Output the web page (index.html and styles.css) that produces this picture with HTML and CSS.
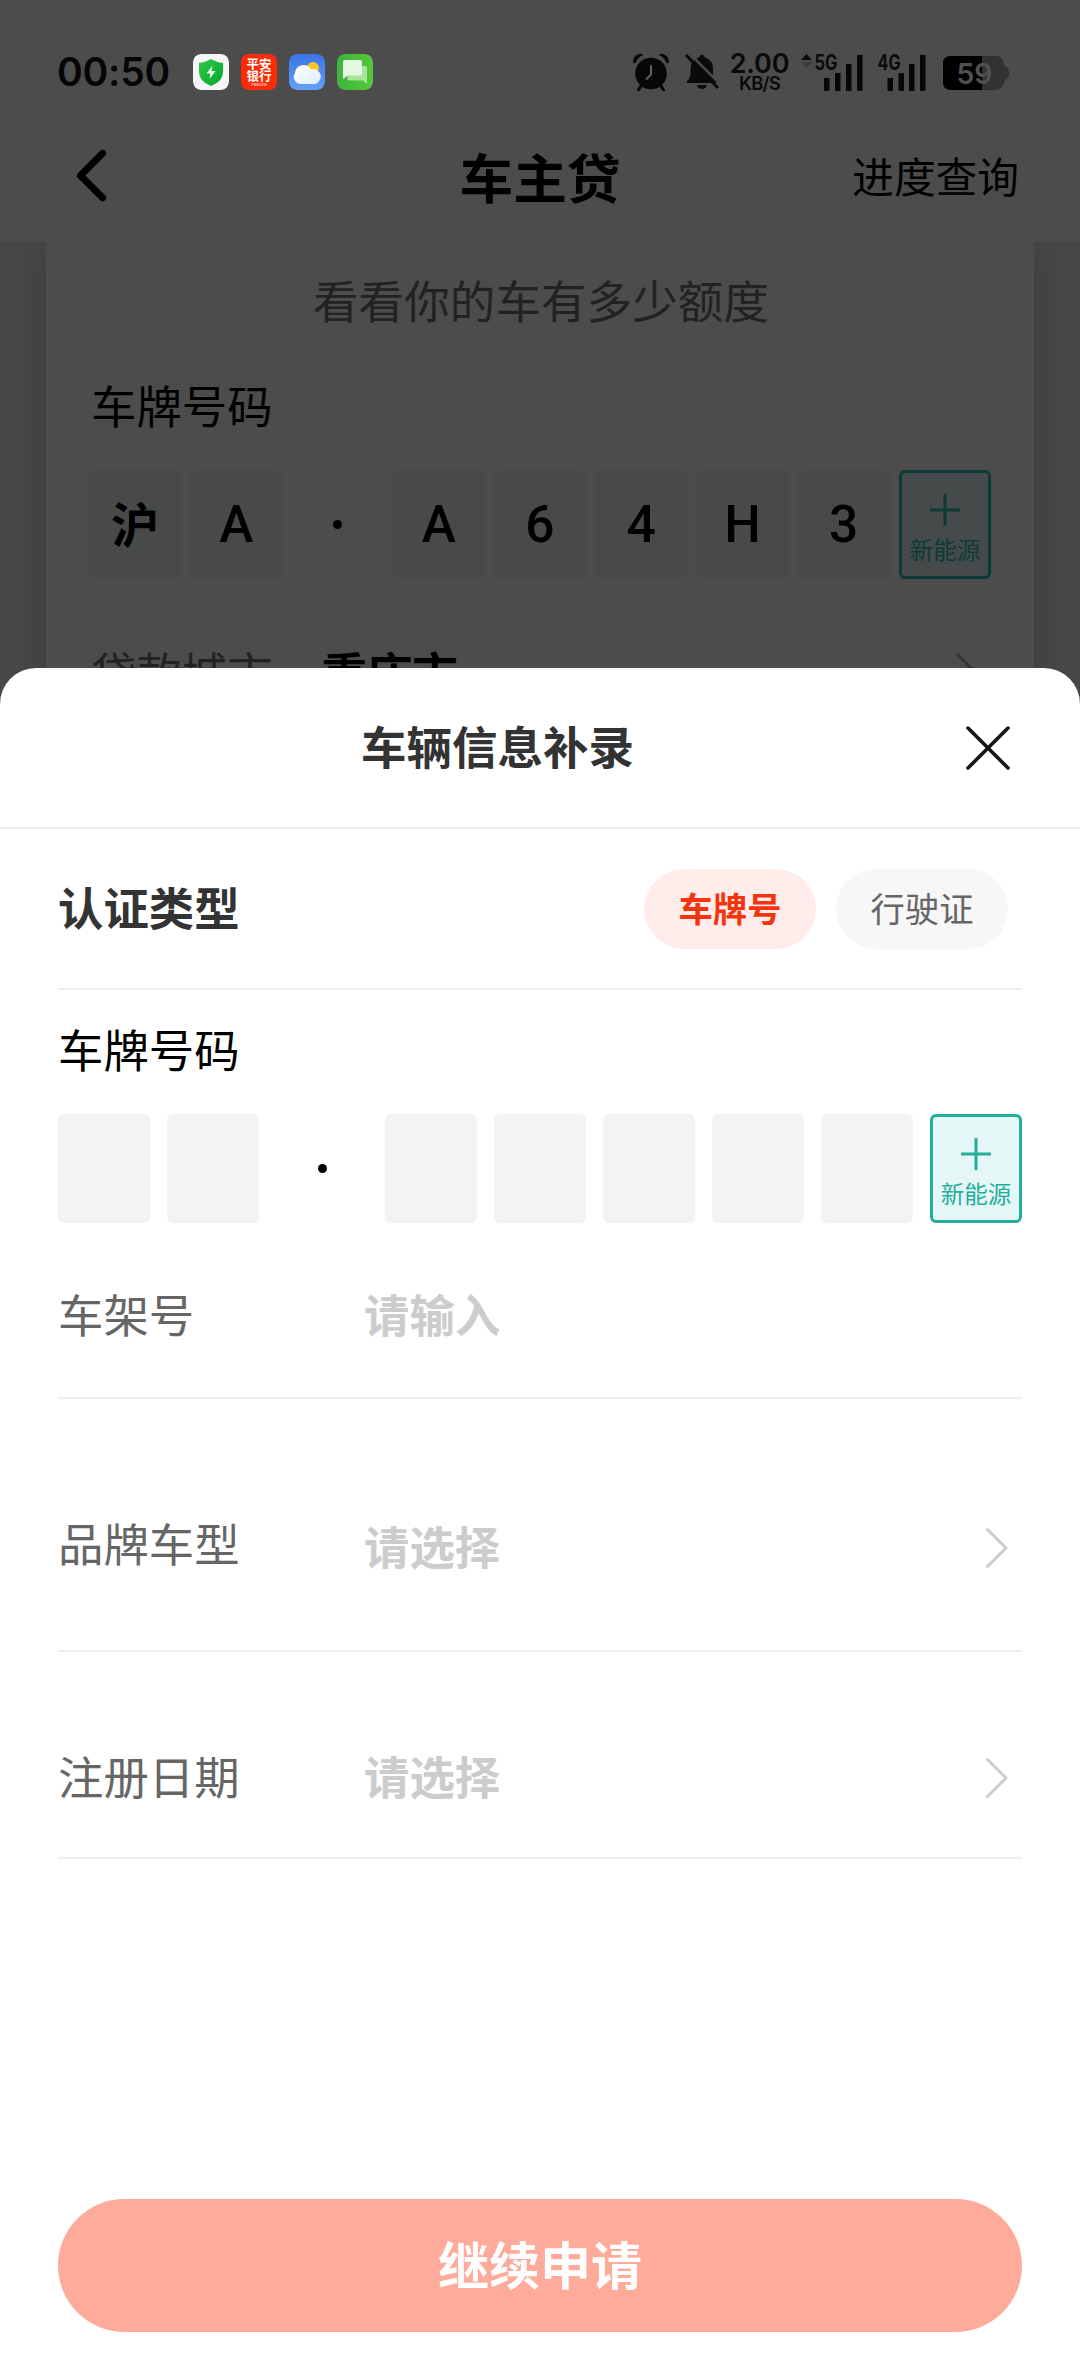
FILE: index.html
```html
<!DOCTYPE html>
<html lang="zh-CN">
<head>
<meta charset="utf-8">
<title>车主贷</title>
<link rel="stylesheet" href="styles.css">
</head>
<body>
<div class="screen">
  <header class="top">
    <div class="status">
      <span class="clock">00:50</span>
      <div class="apps">
        <svg class="app" viewBox="0 0 36 36">
          <defs><linearGradient id="shield" x1="0" y1="0" x2="1" y2="1"><stop offset="0" stop-color="#2fc94c"/><stop offset="1" stop-color="#03a62a"/></linearGradient></defs>
          <rect width="36" height="36" rx="8" fill="#f7f5f8"/>
          <path d="M18 5Q24 8.500 30 9V18Q30 27.500 18 32Q6 27.500 6 18V9Q12 8.500 18 5Z" fill="url(#shield)"/>
          <path d="M19.500 11.500L13.500 19.500H17.500L16.500 25L22.500 17H18.500Z" fill="#eafff0"/>
        </svg>
        <div class="app bank"><span>平安</span><span>银行</span><i>PINGAN</i></div>
        <svg class="app" viewBox="0 0 36 36">
          <defs><linearGradient id="sky" x1="0" y1="0" x2="0" y2="1"><stop offset="0" stop-color="#3a73e8"/><stop offset="1" stop-color="#63a2f5"/></linearGradient>
          <linearGradient id="cloud" x1="0" y1="0" x2="1" y2="1"><stop offset="0" stop-color="#fff"/><stop offset="1" stop-color="#dfecff"/></linearGradient></defs>
          <rect width="36" height="36" rx="8" fill="url(#sky)"/>
          <circle cx="24" cy="14" r="6" fill="#fbc926"/>
          <path d="M12 30a7 7 0 0 1-6-11a8.500 8.500 0 0 1 16-3.500a7.500 7.500 0 1 1 1 14.500Z" fill="url(#cloud)"/>
        </svg>
        <svg class="app" viewBox="0 0 36 36">
          <defs><linearGradient id="msg" x1="0" y1="0" x2="1" y2="0"><stop offset="0" stop-color="#3fb43c"/><stop offset="1" stop-color="#55c738"/></linearGradient></defs>
          <rect width="36" height="36" rx="8" fill="url(#msg)"/>
          <path d="M14 12H28Q30 12 30 14V30L26 26.500H13Q11 26.500 10 25Z" fill="#a8e49d"/>
          <path d="M8 6H23Q25 6 25 8V19.500Q25 21.500 23 21.500H11L6 25V8Q6 6 8 6Z" fill="#e6f8e2"/>
        </svg>
      </div>
      <div class="indicators">
        <svg class="alarm" viewBox="0 0 38 38">
          <path d="M1 9Q1 3 7 1Q10 0 11 2Q6 4 3.500 10Q1 11 1 9ZM37 9Q37 3 31 1Q28 0 27 2Q32 4 34.500 10Q37 11 37 9Z" fill="#070707"/>
          <circle cx="19" cy="20.500" r="15.800" fill="#070707"/>
          <path d="M9 33L6.500 37M29 33L31.500 37" stroke="#070707" stroke-width="3" stroke-linecap="round"/>
          <path d="M19 13V21.500L14.500 26" fill="none" stroke="#606060" stroke-width="2" stroke-linecap="round"/>
        </svg>
        <svg class="bell" viewBox="0 0 36 38">
          <path d="M18 1.500Q20 1.500 20.500 4Q29 7 29 16V22L32.500 28V30H3V28Q6.500 25 6.500 20V16Q6.500 7 15.500 4Q16 1.500 18 1.500ZM13 32H23Q22 36 18 36T13 32Z" fill="#0a0a0a"/>
          <path d="M4-1L37 32" stroke="#4c4c4c" stroke-width="2.500"/>
          <path d="M2 2L34 35" stroke="#0a0a0a" stroke-width="3"/>
        </svg>
        <div class="speed"><b>2.00</b><span>KB/S</span></div>
        <svg class="signal five" viewBox="0 0 64 38">
          <path d="M6.500 1L12 7H1Z" fill="#0a0a0a"/><path d="M6.500 15L12 9H1Z" fill="#3b3b3b"/>
          <text x="14.500" y="16.500" textLength="23" lengthAdjust="spacingAndGlyphs">5G</text>
          <path d="M24 25h5.500v13h-5.500zM35 20h5.500v18h-5.500zM46 11h5.500v27h-5.500zM57 2h5.500v36h-5.500z" fill="#070707"/>
        </svg>
        <svg class="signal four" viewBox="0 0 50 38">
          <text x="0.500" y="16.500" textLength="23" lengthAdjust="spacingAndGlyphs">4G</text>
          <path d="M10.500 25h5.500v13h-5.500zM21.500 20h5.500v18h-5.500zM32 11h5.500v27h-5.500zM43 2h5.500v36h-5.500z" fill="#070707"/>
        </svg>
        <svg class="battery" viewBox="0 0 66 34">
          <path d="M8 0H53Q60 0 61 8Q62 11 65 12Q67 17 65 22Q62 23 61 27Q59 34 53 34H8Q0 34 0 26V8Q0 0 8 0Z" fill="#323232"/>
          <path d="M8 0H39V34H8Q0 34 0 26V8Q0 0 8 0Z" fill="#000"/>
          <text class="level" x="13.500" y="28" textLength="36" lengthAdjust="spacingAndGlyphs">59</text>
        </svg>
      </div>
    </div>
    <nav class="nav">
      <svg class="back" viewBox="0 0 34 52"><path d="M28 5L7 26L28 47" fill="none" stroke="#000" stroke-width="6.500" stroke-linecap="round" stroke-linejoin="round"/></svg>
      <h1>车主贷</h1>
      <a class="progress">进度查询</a>
    </nav>
  </header>
  <main class="page">
    <section class="card">
      <p class="lead">看看你的车有多少额度</p>
      <h2 class="field-name">车牌号码</h2>
      <div class="plate dim">
        <span class="cell han">沪</span><span class="cell">A</span><span class="sep"><i></i></span>
        <span class="cell">A</span><span class="cell">6</span><span class="cell">4</span><span class="cell">H</span><span class="cell">3</span>
        <span class="energy"><svg viewBox="0 0 30 32"><path d="M15 0V32M0 16H30"/></svg><em>新能源</em></span>
      </div>
      <div class="city"><span>贷款城市</span><b>重庆市</b><svg viewBox="0 0 24 42"><path d="M2 2L21 21L2 40" fill="none" stroke="#353535" stroke-width="3"/></svg></div>
    </section>
  </main>
  <section class="sheet">
    <div class="sheet-head">
      <h2>车辆信息补录</h2>
      <svg class="close" viewBox="0 0 44 44"><path d="M2 2L42 42M42 2L2 42" stroke="#111" stroke-width="3.500" stroke-linecap="round"/></svg>
    </div>
    <div class="form">
      <div class="row type">
        <b>认证类型</b>
        <div class="pills"><span class="pill on">车牌号</span><span class="pill">行驶证</span></div>
      </div>
      <h3 class="field-name">车牌号码</h3>
      <div class="plate">
        <span class="cell"></span><span class="cell"></span><span class="sep"><i></i></span>
        <span class="cell"></span><span class="cell"></span><span class="cell"></span><span class="cell"></span><span class="cell"></span>
        <span class="energy"><svg viewBox="0 0 30 32"><path d="M15 0V32M0 16H30"/></svg><em>新能源</em></span>
      </div>
      <div class="row vin"><label>车架号</label><span class="hint">请输入</span></div>
      <div class="row model"><label>品牌车型</label><span class="hint">请选择</span><svg class="go" viewBox="0 0 24 42"><path d="M2.500 2.500L21 21L2.500 39.500"/></svg></div>
      <div class="row date"><label>注册日期</label><span class="hint">请选择</span><svg class="go" viewBox="0 0 24 42"><path d="M2.500 2.500L21 21L2.500 39.500"/></svg></div>
    </div>
    <button class="submit">继续申请</button>
  </section>
</div>
</body>
</html>
```
FILE: styles.css
```css
* { box-sizing: border-box; }
body { margin: 0; font-family: "Noto Sans CJK SC", sans-serif; }
h1, h2, h3, p { margin: 0; font-weight: 400; }
i, em { font-style: normal; }
svg { display: block; flex: none; }
.screen { position: relative; width: 1080px; height: 2372px; overflow: hidden; background: #474747; display: flex; flex-direction: column; }
.top { height: 242px; background: #4c4c4c; flex: none; }

.status { height: 118px; padding: 53px 71px 0 57px; display: flex; align-items: flex-start; }
.clock { width: 137px; font: 600 39px/38px Inter, sans-serif; letter-spacing: -0.2px; color: #060606; }
.apps { display: flex; gap: 12px; padding-top: 1px; }
.app { width: 36px; height: 36px; border-radius: 8px; overflow: hidden; }
.bank { background: #fb2b05; color: #fff; display: flex; flex-direction: column; align-items: center; padding-top: 4px; }
.bank span { font-size: 12.500px; line-height: 12px; font-weight: 700; }
.bank i { font: 4px/5px Inter, sans-serif; }
.indicators { display: flex; flex: 1; margin-left: 259px; }
.alarm { width: 38px; height: 38px; }
.bell { width: 36px; height: 38px; margin-left: 14px; }
.speed { width: 61px; margin-left: 9px; display: flex; flex-direction: column; align-items: center; font-family: Inter, sans-serif; color: #0a0a0a; }
.speed b { font-size: 27px; line-height: 21px; font-weight: 600; letter-spacing: -0.2px; }
.speed span { font-size: 18.500px; line-height: 18px; font-weight: 600; letter-spacing: -0.8px; }
.signal { height: 38px; overflow: visible; }
.signal text { font: 700 21px Inter, sans-serif; fill: #0a0a0a; }
.five { width: 64px; margin-left: 10px; }
.four { width: 50px; margin-left: 13px; }
.battery { width: 66px; height: 34px; margin: 3px 0 0 16px; }
.battery .level { font: 600 29px Inter, sans-serif; fill: #505050; }

.nav { height: 118px; padding: 0 61px 0 73px; display: grid; grid-template-columns: 298px 1fr 300px; align-items: center; }
.back { width: 36px; height: 55px; margin-bottom: 3px; }
.nav h1 { font-size: 53.700px; line-height: 60px; font-weight: 700; text-align: center; color: #000; margin: 0 10px 2px 0; }
.progress { font-size: 41.700px; line-height: 50px; text-align: right; color: #000; font-weight: 400; margin-bottom: 5px; }

.page { flex: 1; padding: 0 46px; overflow: hidden; }
.card { height: 600px; padding: 27px 43px 0 45px; background: #4c4c4c; box-shadow: 0 0 30px rgba(0, 0, 0, .16); }
.lead { font-size: 45.600px; line-height: 60px; text-align: center; color: #222; }
.field-name { font-size: 45.400px; line-height: 60px; color: #000; }
.card .field-name { margin-top: 45px; }
.plate { display: flex; justify-content: space-between; }
.cell, .sep, .energy { width: 92px; height: 109px; border-radius: 6px; display: flex; align-items: center; justify-content: center; }
.cell { background: #f2f3f5; }
.sep i { width: 9px; height: 9px; border-radius: 50%; background: #000; }
.energy { flex-direction: column; background: #e5f6f6; border: 3px solid #23ae9c; color: #23ae9c; padding-top: 8px; }
.energy svg { width: 30px; height: 32px; }
.energy path { stroke: currentColor; stroke-width: 3px; fill: none; }
.energy em { font-size: 23.500px; line-height: 28px; margin-top: 9px; white-space: nowrap; }
.dim { margin: 36px 0 0 -2px; }
.dim .cell { background: #484a4a; font: 500 51.500px/60px Roboto, sans-serif; color: #000; }
.dim .han { font: 700 48px/60px "Noto Sans CJK SC", sans-serif; padding-bottom: 6px; }
.dim .energy { background: #454a4a; border-color: #0d3a35; color: #0d3a35; }
.city { display: flex; align-items: center; margin-top: 62px; font-size: 45.400px; line-height: 60px; color: #222; }
.city b { margin-left: 49px; color: #000; }
.city svg { width: 24px; height: 42px; margin: 3px 12px 0 auto; }

.sheet { position: absolute; left: 0; top: 668px; width: 1080px; height: 1704px; border-radius: 36px 36px 0 0; background: #fff; }
.sheet-head { height: 161px; border-bottom: 2px solid #ececec; padding: 0 70px 0 361px; display: flex; align-items: center; justify-content: space-between; }
.sheet-head h2 { font-size: 45.500px; line-height: 60px; font-weight: 700; color: #333; padding-bottom: 5px; }
.close { width: 44px; height: 44px; }
.form { padding: 0 58px; }
.row { display: flex; align-items: center; border-bottom: 2px solid #eee; font-size: 45.400px; line-height: 60px; }
.type { height: 161px; padding-right: 14px; justify-content: space-between; color: #333; }
.type b { padding-bottom: 6px; }
.pills { display: flex; gap: 20px; }
.pill { width: 172px; height: 80px; border-radius: 40px; background: #f7f7f7; color: #666; font-size: 34.300px; line-height: 76px; text-align: center; }
.pill.on { background: #ffeceb; color: #f5330c; font-weight: 700; }
.form .field-name { margin-top: 28px; }
.form .plate { margin-top: 36px; }
.row label { width: 306px; color: #666; padding-bottom: 6px; }
.hint { color: #ccc; font-weight: 700; padding-bottom: 6px; }
.go { width: 24px; height: 42px; margin: 0 13px 0 auto; }
.go path { fill: none; stroke: #ccc; stroke-width: 3px; stroke-linecap: round; stroke-linejoin: round; }
.vin { height: 176px; padding-top: 12px; }
.model { height: 253px; padding-top: 46px; }
.model label { margin-top: -5px; }
.date { height: 207px; padding-top: 46px; }
.submit { display: block; width: 964px; height: 133px; margin: 340px 58px 0; padding: 0 0 6px; border: 0; border-radius: 67px; background: #ffab9b; color: #fff; font: 700 51px/60px "Noto Sans CJK SC", sans-serif; }
```
